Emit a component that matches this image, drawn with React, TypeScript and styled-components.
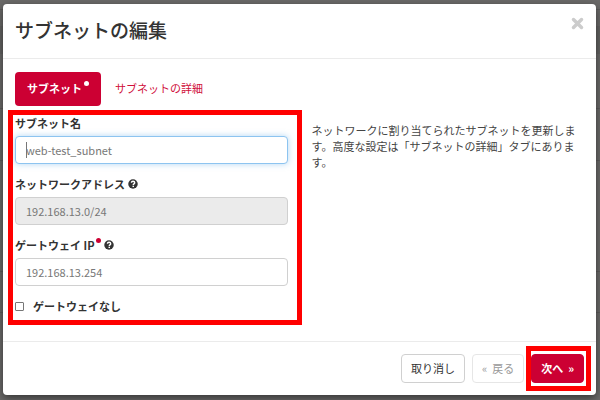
import React from "react";
import styled, { createGlobalStyle, css } from "styled-components";

const GlobalStyle = createGlobalStyle`
  * { box-sizing: border-box; }
  body {
    margin: 0;
    background: #6b6a69;
    color: #333;
    font-family: "Noto Sans CJK JP", "Noto Sans", sans-serif;
    font-size: 11px;
    line-height: 16px;
  }
  button, input { font: inherit; }
`;

const Backdrop = styled.div`
  min-height: 100vh;
  padding: 4px 4px 4px 3px;
  background: linear-gradient(
    #6b6a69 9px, #5e5d5c 9px, #5e5d5c 10px, #6b6a69 10px, #6b6a69 26px,
    #646362 26px, #646362 54px, #6b6a69 54px, #6b6a69 108px,
    #5e5d5c 108px, #5e5d5c 109px, #6b6a69 109px,
    #6b6a69 160px, #5e5d5c 160px, #5e5d5c 161px, #6b6a69 161px, #6b6a69 271px,
    #5e5d5c 271px, #5e5d5c 272px, #6b6a69 272px, #6b6a69 312px,
    #5e5d5c 312px, #5e5d5c 313px, #6b6a69 313px
  );
`;

const Dialog = styled.section`
  background: #fff;
  border-radius: 4px;
  box-shadow: 0 3px 9px rgba(0, 0, 0, 0.5);
`;

const Header = styled.header`
  display: flex;
  justify-content: space-between;
  align-items: flex-start;
  height: 55px;
  padding: 12px 12px 0;
  border-bottom: 1px solid #ebebeb;
`;

const Title = styled.h1`
  margin: 0;
  font-size: 19px;
  font-weight: 500;
  line-height: 28px;
`;

const CloseButton = styled.button`
  display: flex;
  margin: 1px 0 0;
  padding: 0;
  border: 0;
  background: none;
  color: #ccc;
`;

const Tabs = styled.nav`
  display: flex;
  padding: 13px 12px 0;
`;

const Tab = styled.a<{ $active?: boolean }>`
  display: flex;
  align-items: center;
  height: 34px;
  padding: 0 12px 2px;
  border-radius: 4px;
  color: #d0103c;
  text-decoration: none;
  margin-right: 2px;
  ${(p) => p.$active && css`
    background: #cc0033;
    color: #fff;
    font-weight: 700;
  `}
`;

const Required = styled.span<{ $light?: boolean }>`
  width: 5px;
  height: 5px;
  margin: 0 0 10px 2px;
  border-radius: 50%;
  background: ${(p) => (p.$light ? "#fff" : "#cc0033")};
`;

const Body = styled.form`
  display: grid;
  grid-template-columns: 1fr 1fr;
  gap: 24px;
  padding: 9px 12px 27px;
`;

const Fields = styled.div`
  position: relative;
`;

const Field = styled.div`
  margin-bottom: 12px;
`;

const Label = styled.label`
  display: flex;
  align-items: center;
  height: 16px;
  margin-bottom: 5px;
  font-weight: 700;
`;

const HelpIcon = styled.svg`
  width: 10px;
  height: 10px;
  margin-left: 3px;
`;

const TextInput = styled.input<{ $active?: boolean }>`
  display: block;
  width: 100%;
  height: 28px;
  padding: 0 10px;
  border: 1px solid #d0d0d0;
  border-radius: 4px;
  outline: 0;
  background: #fff;
  color: #777;
  &:disabled { background: #ebebeb; }
  ${(p) => p.$active && css`
    border-color: #8dc4f0;
    box-shadow: 0 0 6px rgba(102, 175, 233, 0.5);
  `}
`;

const InputWrap = styled.div`
  position: relative;
`;

const Caret = styled.span`
  position: absolute;
  left: 11px;
  top: 6px;
  width: 1px;
  height: 16px;
  background: #777;
`;

const CheckLabel = styled.label`
  display: flex;
  align-items: center;
  gap: 9px;
  height: 16px;
  font-weight: 700;
`;

const Checkbox = styled.input`
  appearance: none;
  width: 9px;
  height: 9px;
  margin: 0;
  border: 1px solid #777;
  border-radius: 1px;
  background: #fff;
  &:checked { background: #cc0033; }
`;

const Description = styled.p`
  margin: 7px 0 0;
  color: #444;
`;

const Footer = styled.footer`
  display: flex;
  justify-content: flex-end;
  gap: 7px;
  padding: 12px;
  border-top: 1px solid #ebebeb;
`;

const Button = styled.button<{ $primary?: boolean }>`
  height: 29px;
  padding: 0 9px 2px;
  border: 1px solid #d0d0d0;
  border-radius: 4px;
  background: #fff;
  color: #333;
  white-space: nowrap;
  &:disabled { color: #999; border-color: #e6e6e6; }
  ${(p) => p.$primary && css`
    border-color: #cc0033;
    background: #cc0033;
    color: #fff;
    font-weight: 700;
  `}
`;

const NextWrap = styled.div`
  position: relative;
`;

const Highlight = styled.span<{ $area: "fields" | "next" }>`
  position: absolute;
  inset: ${(p) => (p.$area === "fields" ? "-5px -14px -11px -7px" : "-8px -7px -8px -5px")};
  border: 5px solid #f00;
  pointer-events: none;
`;

function Help() {
  return (
    <HelpIcon viewBox="0 0 20 20" aria-hidden="true">
      <circle cx="10" cy="10" r="9.5" fill="#333" />
      <path d="M6.8 7.6C7 5.4 8.2 4.6 10 4.6c2 0 3.4 1 3.4 2.8 0 2.5-2.9 2.3-2.9 4.4" fill="none" stroke="#fff" strokeWidth="2.8" />
      <rect x="9" y="13.4" width="3" height="2.7" fill="#fff" />
    </HelpIcon>
  );
}

export default function App() {
  return (
    <>
      <GlobalStyle />
      <Backdrop>
        <Dialog role="dialog" aria-labelledby="title">
          <Header>
            <Title id="title">サブネットの編集</Title>
            <CloseButton type="button" aria-label="閉じる">
              <svg width="13" height="13" viewBox="0 0 12 12">
                <path d="M2.3 2.3l7.4 7.4M9.7 2.3l-7.4 7.4" stroke="currentColor" strokeWidth="3.2" strokeLinecap="round" />
              </svg>
            </CloseButton>
          </Header>
          <Tabs>
            <Tab href="#subnet" $active>サブネット<Required $light /></Tab>
            <Tab href="#details">サブネットの詳細</Tab>
          </Tabs>
          <Body id="subnet-form">
            <Fields>
              <Field>
                <Label htmlFor="name">サブネット名</Label>
                <InputWrap>
                  <TextInput id="name" defaultValue="web-test_subnet" $active />
                  <Caret />
                </InputWrap>
              </Field>
              <Field>
                <Label htmlFor="cidr">ネットワークアドレス<Help /></Label>
                <TextInput id="cidr" defaultValue="192.168.13.0/24" disabled />
              </Field>
              <Field>
                <Label htmlFor="gateway">ゲートウェイ IP<Required /><Help /></Label>
                <TextInput id="gateway" defaultValue="192.168.13.254" />
              </Field>
              <CheckLabel>
                <Checkbox type="checkbox" />
                ゲートウェイなし
              </CheckLabel>
              <Highlight $area="fields" />
            </Fields>
            <Description>
              ネットワークに割り当てられたサブネットを更新します。高度な設定は「サブネットの詳細」タブにあります。
            </Description>
          </Body>
          <Footer>
            <Button type="button">取り消し</Button>
            <Button type="button" disabled>«&nbsp; 戻る</Button>
            <NextWrap>
              <Button type="submit" form="subnet-form" $primary>次へ &nbsp;»</Button>
              <Highlight $area="next" />
            </NextWrap>
          </Footer>
        </Dialog>
      </Backdrop>
    </>
  );
}
